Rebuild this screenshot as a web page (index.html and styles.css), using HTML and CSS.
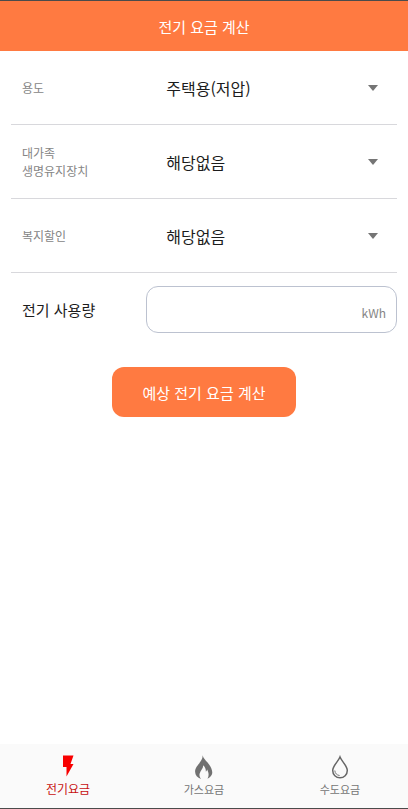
FILE: index.html
```html
<!DOCTYPE html>
<html lang="ko">
<head>
<meta charset="utf-8">
<meta name="viewport" content="width=device-width, initial-scale=1">
<title>전기 요금 계산</title>
<link rel="stylesheet" href="styles.css">
</head>
<body>
<header class="header"><h1 class="title">전기 요금 계산</h1></header>
<main class="main">
  <form class="form">
    <div class="row">
      <label class="label" for="usage-type">용도</label>
      <div class="picker">
        <select class="select" id="usage-type"><option>주택용(저압)</option></select>
        <svg class="arrow" viewBox="0 0 10 6" aria-hidden="true"><path d="M0 0h10L5 6z"/></svg>
      </div>
    </div>
    <div class="row">
      <label class="label" for="family">대가족<br>생명유지장치</label>
      <div class="picker">
        <select class="select" id="family"><option>해당없음</option></select>
        <svg class="arrow" viewBox="0 0 10 6" aria-hidden="true"><path d="M0 0h10L5 6z"/></svg>
      </div>
    </div>
    <div class="row">
      <label class="label" for="welfare">복지할인</label>
      <div class="picker">
        <select class="select" id="welfare"><option>해당없음</option></select>
        <svg class="arrow" viewBox="0 0 10 6" aria-hidden="true"><path d="M0 0h10L5 6z"/></svg>
      </div>
    </div>
    <div class="usage">
      <label class="usage-label" for="amount">전기 사용량</label>
      <div class="field">
        <input class="input" id="amount" type="text" inputmode="numeric">
        <span class="unit">kWh</span>
      </div>
    </div>
    <button class="submit" type="button">예상 전기 요금 계산</button>
  </form>
</main>
<nav class="nav">
  <a class="tab tab-active" href="#electric">
    <svg class="icon" viewBox="0 0 24 24" aria-hidden="true"><path fill="#f80000" d="M7 .5h10.500L14.500 9h3L10.500 21.500v-9.500H7z"/></svg>
    <span>전기요금</span>
  </a>
  <a class="tab" href="#gas">
    <svg class="icon" viewBox="1 1 22.500 22.500" aria-hidden="true"><path fill="#717171" d="M11 1c.4 3.600 3.700 5.400 6 8.800 2.300 3.300 4.400 7.700 1.800 11-.8 1.100-1.900 1.900-3.300 2.500 1.900-3.300.9-6.200-.3-8.600-.2 1-.6 1.600-1.200 2.100.1-2.800-.8-4.800-2.500-6.300.2 3.200-2.600 5-3.300 7.800-.5 1.900 0 3.700 1.300 5.100-3.500-1-5.500-3.500-5.600-6.700C3.700 10.800 11.400 7.700 11 1z"/></svg>
    <span>가스요금</span>
  </a>
  <a class="tab" href="#water">
    <svg class="icon" viewBox="0 0 24 24" aria-hidden="true"><path fill="none" stroke="#666" stroke-width="1.500" d="M12 2C10.500 6 4.700 10.900 4.700 15.500a7.300 7.300 0 0 0 14.600 0C19.300 10.900 13.500 6 12 2z"/><path fill="none" stroke="#777" stroke-width="1" d="M6.800 15.500c.2 2.800 2 4.700 4.800 5"/></svg>
    <span>수도요금</span>
  </a>
</nav>
</body>
</html>
```
FILE: styles.css
```css
* {
  box-sizing: border-box;
}

body {
  margin: 0;
  min-height: 100vh;
  display: flex;
  flex-direction: column;
  border-top: 1px solid #4b4b4b;
  border-bottom: 1px solid #4b4b4b;
  background: #fff;
  color: #1c1c1c;
  font-family: "Noto Sans CJK KR", sans-serif;
  font-weight: 400;
}

.header {
  height: 50px;
  display: flex;
  align-items: center;
  justify-content: center;
  background: #ff7a41;
  color: #fff;
}

.title {
  margin: 0;
  font-size: 15px;
  font-weight: 400;
}

.main {
  flex: 1;
  padding: 0 11px;
}

.form {
  display: flex;
  flex-direction: column;
}

.row {
  display: grid;
  grid-template-columns: 5fr 8fr;
  align-items: center;
  min-height: 74px;
  padding-left: 11px;
  border-bottom: 1px solid #d8d8dc;
}

.label {
  color: #858585;
  font-size: 12px;
  line-height: 18px;
}

.picker {
  display: flex;
  align-items: center;
  padding-right: 19px;
}

.select {
  flex: 1;
  min-width: 0;
  height: 48px;
  padding: 0;
  border: 0;
  appearance: none;
  background: transparent;
  color: inherit;
  font: inherit;
  font-size: 16px;
}

.arrow {
  width: 10px;
  height: 6px;
  fill: #757575;
}

.usage {
  display: flex;
  align-items: center;
  margin-top: 13px;
  padding-left: 11px;
}

.usage-label {
  flex: 1;
  font-size: 15px;
}

.field {
  display: flex;
  align-items: center;
  width: 67%;
  height: 47px;
  padding: 0 10px 0 12px;
  border: 1px solid #bcc2d0;
  border-radius: 12px;
}

.input {
  flex: 1;
  min-width: 0;
  padding: 0;
  border: 0;
  outline: 0;
  background: transparent;
  font: inherit;
}

.unit {
  padding-top: 5px;
  color: #858585;
  font-size: 12px;
}

.submit {
  align-self: center;
  height: 50px;
  margin-top: 34px;
  padding: 0 30px;
  border: 0;
  border-radius: 12px;
  background: #ff7a41;
  color: #fff;
  font: inherit;
  font-size: 15px;
}

.nav {
  display: flex;
  height: 64px;
  background: #fafafa;
}

.tab {
  flex: 1;
  display: flex;
  flex-direction: column;
  align-items: center;
  padding-top: 11px;
  color: #757575;
  font-size: 11px;
  line-height: 20px;
  text-decoration: none;
}

.tab-active {
  color: #c81010;
  font-size: 12px;
}

.icon {
  width: 24px;
  height: 24px;
}
```
